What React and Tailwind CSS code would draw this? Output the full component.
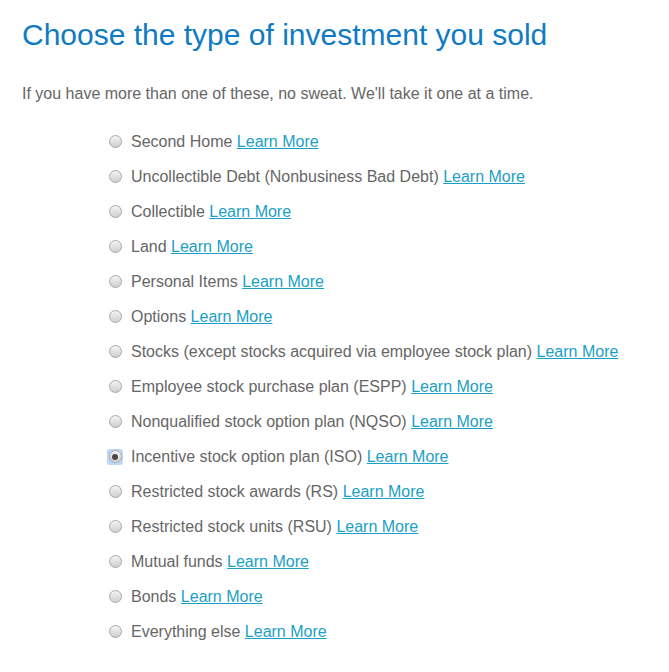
const items = [
  "Second Home",
  "Uncollectible Debt (Nonbusiness Bad Debt)",
  "Collectible",
  "Land",
  "Personal Items",
  "Options",
  "Stocks (except stocks acquired via employee stock plan)",
  "Employee stock purchase plan (ESPP)",
  "Nonqualified stock option plan (NQSO)",
  "Incentive stock option plan (ISO)",
  "Restricted stock awards (RS)",
  "Restricted stock units (RSU)",
  "Mutual funds",
  "Bonds",
  "Everything else",
];

const Radio = ({ checked }) => (
  <span
    className={
      "flex items-center justify-center w-[16px] h-[16px] " +
      (checked ? "rounded-[3px] bg-[#bcd6f5] " : "")
    }
  >
    <span className="flex items-center justify-center w-[13px] h-[13px] rounded-full border border-[#a9a9a9] bg-gradient-to-b from-[#f4f4f4] to-[#cfcfcf]">
      {checked && <span className="w-[6px] h-[6px] rounded-full bg-[#4a4a4a]" />}
    </span>
  </span>
);

export default function App() {
  return (
    <div className="min-h-[672px] bg-white px-[22px] pt-[18px] font-['Liberation_Sans',Arial,sans-serif]">
      <h1 className="text-[30px] leading-[33px] text-[#0f7bc4]">
        Choose the type of investment you sold
      </h1>
      <p className="mt-[32px] text-[16px] leading-[22px] text-[#666666]">
        If you have more than one of these, no sweat. We'll take it one at a time.
      </p>
      <ul className="mt-[19px] pl-[85px] flex flex-col">
        {items.map((label, i) => (
          <li key={label} className="flex items-center h-[35px] gap-[8px] text-[16px] text-[#666666]">
            <Radio checked={i === 9} />
            <span>
              {label}{" "}
              <a href="#" className="text-[#1a9fc6] underline">
                Learn More
              </a>
            </span>
          </li>
        ))}
      </ul>
    </div>
  );
}
